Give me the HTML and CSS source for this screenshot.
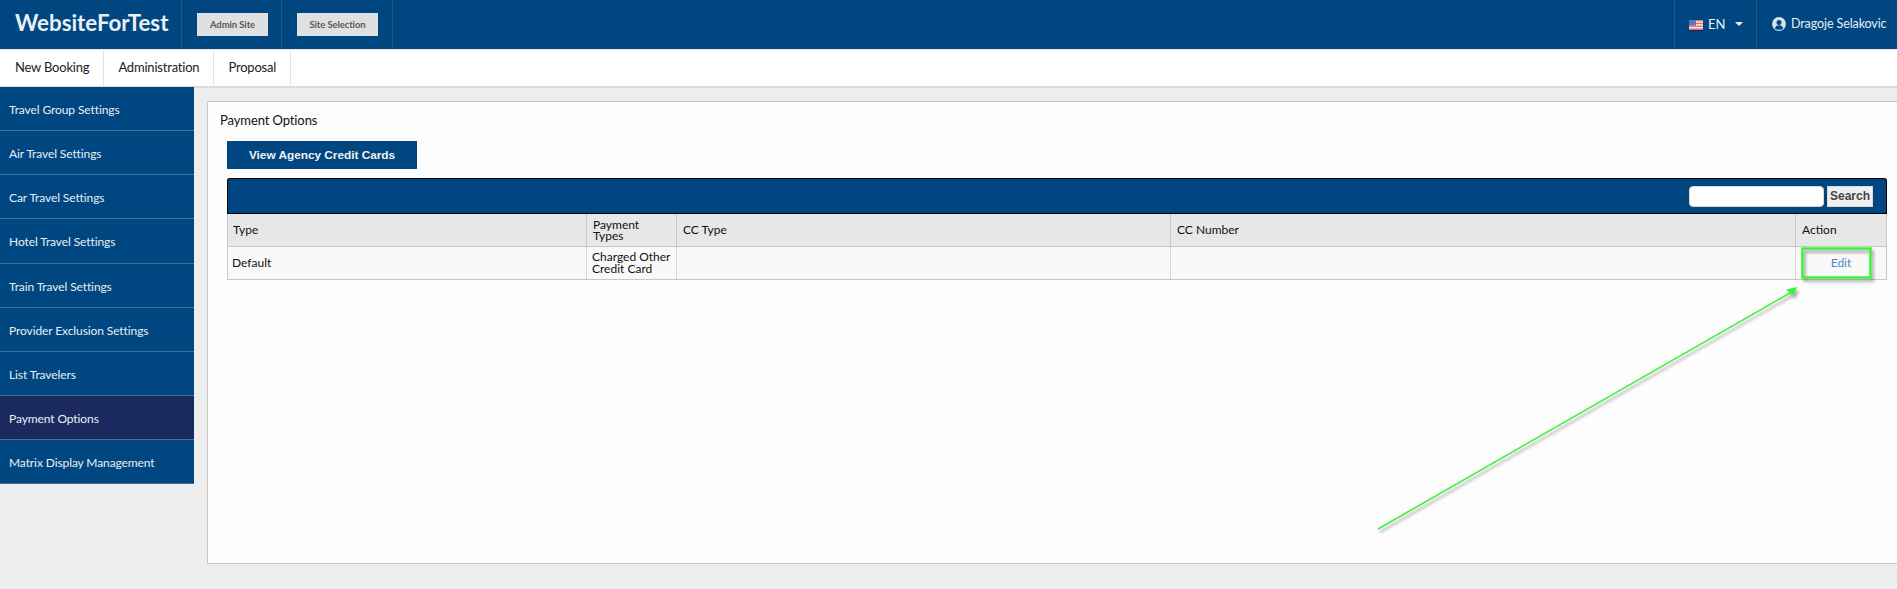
FILE: index.html
```html
<!DOCTYPE html>
<html lang="en">
<head>
<meta charset="utf-8">
<title>Payment Options</title>
<link rel="stylesheet" href="styles.css">
</head>
<body>
<header class="topbar">
  <div class="brand">WebsiteForTest</div>
  <div class="top-cell cell-admin"><button class="top-btn">Admin Site</button></div>
  <div class="top-cell cell-site"><button class="top-btn">Site Selection</button></div>
  <div class="top-spacer"></div>
  <div class="lang">
    <svg class="flag" width="14" height="10" viewBox="0 0 14 10">
      <rect width="14" height="10" fill="#f4f1f1"/>
      <rect y="0" width="14" height="1.4" fill="#e8706a"/>
      <rect y="2.8" width="14" height="1.4" fill="#e8706a"/>
      <rect y="5.6" width="14" height="1.4" fill="#e8706a"/>
      <rect y="8.4" width="14" height="1.6" fill="#e8706a"/>
      <rect width="7" height="5.6" fill="#5f76b8"/>
    </svg>
    <span class="lang-code">EN</span>
    <span class="caret"></span>
  </div>
  <div class="user">
    <svg class="user-icon" width="14" height="14" viewBox="0 0 14 14">
      <circle cx="7" cy="7" r="6.9" fill="#d8e4ef"/>
      <circle cx="7" cy="5.4" r="2.5" fill="#004680"/>
      <path d="M2.8 11.2c.6-2 2.2-3 4.2-3s3.600 1 4.200 3A5.500 5.500 0 0 1 7 12.700a5.500 5.500 0 0 1-4.200-1.500z" fill="#004680"/>
    </svg>
    <span class="user-name">Dragoje Selakovic</span>
  </div>
</header>
<nav class="menu">
  <a class="menu-item">New Booking</a>
  <a class="menu-item">Administration</a>
  <a class="menu-item">Proposal</a>
</nav>
<div class="layout">
  <aside class="sidebar">
    <a class="side-item">Travel Group Settings</a>
    <a class="side-item">Air Travel Settings</a>
    <a class="side-item">Car Travel Settings</a>
    <a class="side-item">Hotel Travel Settings</a>
    <a class="side-item">Train Travel Settings</a>
    <a class="side-item">Provider Exclusion Settings</a>
    <a class="side-item">List Travelers</a>
    <a class="side-item active">Payment Options</a>
    <a class="side-item">Matrix Display Management</a>
  </aside>
  <main class="panel">
    <h1 class="title">Payment Options</h1>
    <div class="inner">
      <button class="primary">View Agency Credit Cards</button>
      <div class="toolbar">
        <input class="search-input" type="text">
        <button class="search-btn">Search</button>
      </div>
      <table class="grid">
        <colgroup>
          <col class="c1"><col class="c2"><col class="c3"><col class="c4"><col class="c5">
        </colgroup>
        <thead>
          <tr>
            <th>Type</th>
            <th>Payment Types</th>
            <th>CC Type</th>
            <th>CC Number</th>
            <th>Action</th>
          </tr>
        </thead>
        <tbody>
          <tr>
            <td>Default</td>
            <td>Charged Other Credit Card</td>
            <td></td>
            <td></td>
            <td class="action"><a class="edit">Edit</a></td>
          </tr>
        </tbody>
      </table>
    </div>
  </main>
</div>
<svg class="annotation" width="1897" height="589" viewBox="0 0 1897 589">
  <defs>
    <filter id="sh" x="-20%" y="-20%" width="140%" height="140%">
      <feDropShadow dx="2" dy="3" stdDeviation="1.500" flood-color="#000" flood-opacity="0.35"/>
    </filter>
  </defs>
  <g filter="url(#sh)">
    <rect x="1802.500" y="248.500" width="68" height="29" fill="none" stroke="#3df23d" stroke-width="2.500"/>
    <path d="M1378 529L1790 293" stroke="#3df23d" stroke-width="1.600" fill="none"/>
    <path d="M1797 287L1786 289.500L1793 296Z" fill="#3df23d"/>
  </g>
</svg>
</body>
</html>
```
FILE: styles.css
```css
* { box-sizing: border-box; }
html, body { margin: 0; padding: 0; }
body {
  width: 1897px;
  height: 589px;
  overflow: hidden;
  position: relative;
  background: #ededed;
  font-family: Lato, "Liberation Sans", sans-serif;
  font-size: 13px;
  color: #111;
}
.topbar {
  display: flex;
  align-items: stretch;
  height: 49px;
  background: #004680;
  color: #e8eff5;
}
.brand {
  width: 182px;
  border-right: 1px solid #1d5a8e;
  padding-left: 15px;
  font-size: 22.300px;
  font-weight: 700;
  line-height: 46px;
  color: #e9f0f6;
}
.top-cell {
  display: flex;
  align-items: center;
  border-right: 1px solid #1d5a8e;
  padding-bottom: 1px;
}
.cell-admin { width: 100px; padding-left: 15px; }
.cell-site { width: 111px; padding-left: 15px; }
.top-btn {
  height: 23px;
  padding: 0;
  border: 0;
  background: #dfe0e2;
  color: #5a5a5a;
  font-family: inherit;
  font-size: 9.500px;
  font-weight: 700;
  letter-spacing: -0.1px;
}
.cell-admin .top-btn { width: 71px; }
.cell-site .top-btn { width: 81px; }
.top-spacer { flex: 1; }
.lang {
  display: flex;
  align-items: center;
  width: 83px;
  border-left: 1px solid #1d5a8e;
  border-right: 1px solid #1d5a8e;
  padding-left: 14px;
  font-size: 13px;
  padding-bottom: 2px;
}
.flag { margin-right: 5px; margin-top: 3px; box-shadow: 0 1px 0 rgba(0,0,0,0.25); }
.lang-code { margin-right: 10px; }
.caret {
  width: 0;
  height: 0;
  border-left: 4px solid transparent;
  border-right: 4px solid transparent;
  border-top: 4px solid #e8eff5;
}
.user {
  display: flex;
  align-items: center;
  gap: 5px;
  width: 140px;
  padding: 0 0 2px 15px;
  font-size: 12.500px;
}
.user-name { white-space: nowrap; letter-spacing: -0.1px; }
.menu {
  display: flex;
  height: 38px;
  margin-top: 1px;
  background: #fff;
  border-bottom: 2px solid #dcdcdc;
  padding-left: 1px;
}
.menu-item {
  padding: 0 14px 2px 14px;
  display: flex;
  align-items: center;
  border-right: 1px solid #e4e4e4;
  font-size: 13px;
  letter-spacing: -0.2px;
  color: #222;
}
.layout {
  display: flex;
  align-items: flex-start;
  height: 502px;
}
.sidebar {
  width: 194px;
  flex: none;
  margin-top: -1px;
  background: #004680;
}
.side-item {
  display: flex;
  align-items: center;
  height: 44.125px;
  padding: 2px 0 0 9px;
  border-bottom: 1px solid #40709c;
  color: #e8eff5;
  font-size: 12px;
  letter-spacing: -0.1px;
}
.side-item.active { background: #1b2a5e; }
.panel {
  flex: 1;
  height: 463px;
  margin: 13px 0 0 13px;
  background: #fdfdfd;
  border: 1px solid #c8c8c8;
  border-right: 0;
  padding: 10px 0 0 12px;
}
.title {
  margin: 0;
  font-size: 13px;
  font-weight: 400;
  letter-spacing: -0.1px;
  line-height: 17px;
  color: #111;
}
.inner { padding: 12px 11px 0 7px; }
.primary {
  display: block;
  width: 190px;
  height: 28px;
  border: 0;
  padding: 0;
  background: #004680;
  color: #f2f2f2;
  font-family: "Liberation Sans", Arial, sans-serif;
  font-size: 11.800px;
  font-weight: 700;
}
.toolbar {
  display: flex;
  align-items: center;
  justify-content: flex-end;
  gap: 3px;
  height: 36px;
  margin-top: 9px;
  padding-right: 13px;
  background: #004680;
  border: 1px solid #000;
  border-width: 1px 1px 1px 0;
  border-radius: 3px 3px 0 0;
  box-shadow: inset 1px 0 0 #000;
}
.search-input {
  width: 135px;
  height: 21px;
  border: 1px solid #d8d8d8;
  border-radius: 4px;
  background: #fff;
  padding: 0;
}
.search-btn {
  width: 46px;
  height: 21px;
  padding: 0;
  border: 1px solid #d8d8d8;
  background: #efefef;
  color: #444;
  font-family: "Liberation Sans", Arial, sans-serif;
  font-size: 12px;
  font-weight: 700;
}
.grid {
  width: 100%;
  table-layout: fixed;
  border-collapse: collapse;
  border-bottom: 1px solid #c8c8c8;
  border-left: 1px solid #c8c8c8;
  border-right: 1px solid #c8c8c8;
  font-size: 12px;
}
.c1 { width: 359px; }
.c2 { width: 90px; }
.c3 { width: 494px; }
.c4 { width: 625px; }
.c5 { width: 91px; }
.grid th {
  height: 32px;
  padding: 0 5px 0 6px;
  background: #e7e7e7;
  border-right: 1px solid #c8c8c8;
  border-bottom: 1px solid #c8c8c8;
  font-weight: 400;
  text-align: left;
  line-height: 11px;
  color: #111;
}
.grid td {
  height: 33px;
  padding: 0 5px;
  background: #f9f9f9;
  border-right: 1px dotted #b5b5b5;
  line-height: 12px;
  color: #111;
}
.grid th:first-child { padding-left: 5px; }
.grid td:first-child { padding-left: 4px; }
.grid th:last-child, .grid td:last-child { border-right: 0; }
.grid td.action { text-align: center; padding: 0; }
.edit { color: #4a86c8; display: inline-block; }
.annotation {
  position: absolute;
  left: 0;
  top: 0;
  pointer-events: none;
}
```
